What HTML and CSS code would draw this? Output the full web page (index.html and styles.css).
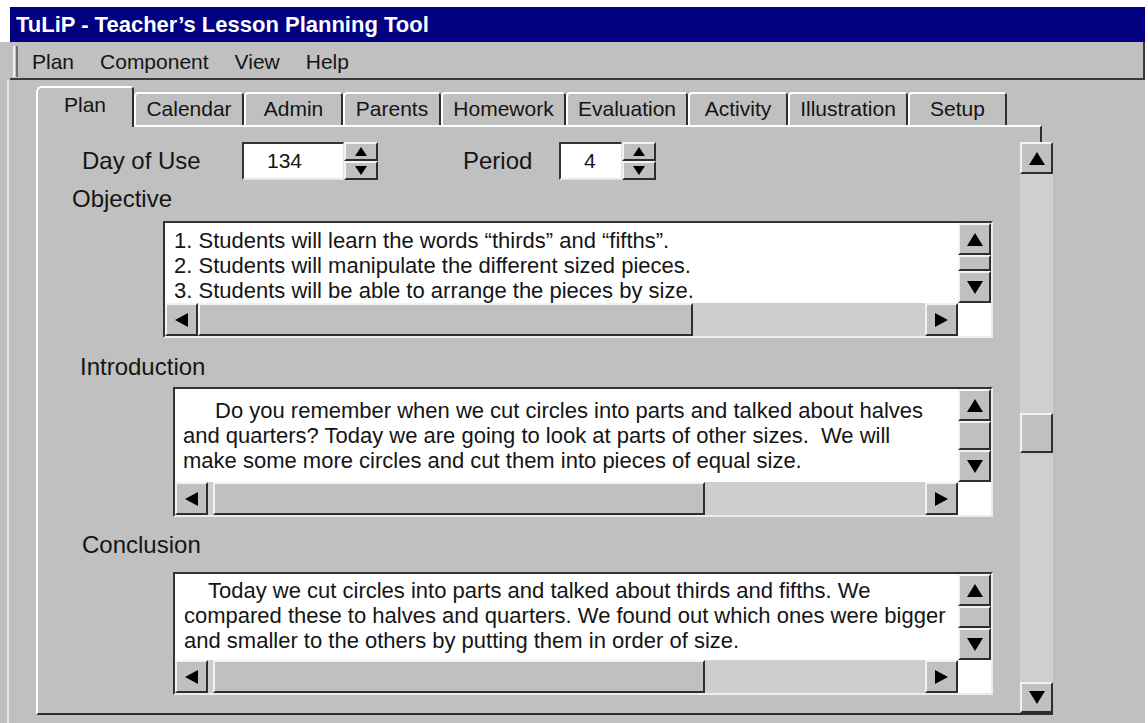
FILE: index.html
```html
<!DOCTYPE html>
<html lang="en">
<head>
<meta charset="utf-8">
<title>TuLiP - Teacher's Lesson Planning Tool</title>
<link rel="stylesheet" href="styles.css">
</head>
<body>
<div class="window">
  <div class="title-row">
    <div class="titlebar">TuLiP - Teacher’s Lesson Planning Tool</div>
  </div>

  <div class="menubar">
    <span class="grip"></span>
    <span class="menu-item">Plan</span>
    <span class="menu-item">Component</span>
    <span class="menu-item">View</span>
    <span class="menu-item">Help</span>
  </div>

  <div class="client">
    <div class="tabstrip">
      <div class="tab active">Plan</div>
      <div class="tab">Calendar</div>
      <div class="tab">Admin</div>
      <div class="tab">Parents</div>
      <div class="tab">Homework</div>
      <div class="tab">Evaluation</div>
      <div class="tab">Activity</div>
      <div class="tab">Illustration</div>
      <div class="tab">Setup</div>
    </div>

    <div class="panel">
      <div class="panel-body">
        <div class="field-row">
          <span class="lbl lbl-day">Day of Use</span>
          <div class="spin-input day-input">134</div>
          <div class="spinner">
            <div class="sbtn"><span class="tri-up sm"></span></div>
            <div class="sbtn"><span class="tri-down sm"></span></div>
          </div>
          <span class="lbl lbl-period">Period</span>
          <div class="spin-input period-input">4</div>
          <div class="spinner">
            <div class="sbtn"><span class="tri-up sm"></span></div>
            <div class="sbtn"><span class="tri-down sm"></span></div>
          </div>
        </div>

        <div class="lbl section-label lbl-obj">Objective</div>
        <div class="textbox tb-obj">
          <div class="tb-text">
            <div>1. Students will learn the words “thirds” and “fifths”.</div>
            <div>2. Students will manipulate the different sized pieces.</div>
            <div>3. Students will be able to arrange the pieces by size.</div>
          </div>
          <div class="tb-vscroll">
            <div class="sbtn"><span class="tri-up"></span></div>
            <div class="vthumb"></div>
            <div class="sbtn"><span class="tri-down"></span></div>
          </div>
          <div class="tb-hscroll">
            <div class="sbtn hbtn"><span class="tri-left"></span></div>
            <div class="hthumb"></div>
            <div class="htrack"></div>
            <div class="sbtn hbtn"><span class="tri-right"></span></div>
          </div>
          <div class="corner"></div>
        </div>

        <div class="lbl section-label lbl-intro">Introduction</div>
        <div class="textbox tb-intro">
          <div class="tb-text">
            <div class="first">Do you remember when we cut circles into parts and talked about halves</div>
            <div>and quarters? Today we are going to look at parts of other sizes.&nbsp; We will</div>
            <div>make some more circles and cut them into pieces of equal size.</div>
          </div>
          <div class="tb-vscroll">
            <div class="sbtn"><span class="tri-up"></span></div>
            <div class="vthumb"></div>
            <div class="sbtn"><span class="tri-down"></span></div>
          </div>
          <div class="tb-hscroll">
            <div class="sbtn hbtn"><span class="tri-left"></span></div>
            <div class="hthumb"></div>
            <div class="htrack"></div>
            <div class="sbtn hbtn"><span class="tri-right"></span></div>
          </div>
          <div class="corner"></div>
        </div>

        <div class="lbl section-label lbl-concl">Conclusion</div>
        <div class="textbox tb-concl">
          <div class="tb-text">
            <div class="first">Today we cut circles into parts and talked about thirds and fifths. We</div>
            <div>compared these to halves and quarters. We found out which ones were bigger</div>
            <div>and smaller to the others by putting them in order of size.</div>
          </div>
          <div class="tb-vscroll">
            <div class="sbtn"><span class="tri-up"></span></div>
            <div class="vthumb"></div>
            <div class="sbtn"><span class="tri-down"></span></div>
          </div>
          <div class="tb-hscroll">
            <div class="sbtn hbtn"><span class="tri-left"></span></div>
            <div class="hthumb"></div>
            <div class="htrack"></div>
            <div class="sbtn hbtn"><span class="tri-right"></span></div>
          </div>
          <div class="corner"></div>
        </div>
      </div>

      <div class="main-vscroll">
        <div class="cap"></div>
        <div class="sbtn"><span class="tri-up"></span></div>
        <div class="track"><div class="track-thumb"></div></div>
        <div class="sbtn"><span class="tri-down"></span></div>
      </div>
    </div>
  </div>
</div>
</body>
</html>
```

FILE: styles.css
```css
* {
  box-sizing: border-box;
}

html,
body {
  margin: 0;
  padding: 0;
}

body {
  width: 1148px;
  height: 723px;
  overflow: hidden;
  background: #ffffff;
  color: #151515;
  font-family: "Liberation Sans", Arial, sans-serif;
}

/* ---------- window frame ---------- */
.window {
  margin-top: 7px;
  width: 1145px;
  height: 716px;
  background: #c0c0c0;
  display: flex;
  flex-direction: column;
}

.title-row {
  background: #ffffff;
  padding-left: 10px;
}

.titlebar {
  height: 35px;
  padding-left: 6px;
  background: #000080;
  color: #ffffff;
  font-size: 22px;
  font-weight: bold;
  line-height: 35px;
  white-space: nowrap;
}

.menubar {
  margin-left: 10px;
  height: 38px;
  display: flex;
  align-items: center;
  padding-top: 3px;
  border-right: 2px solid #3a3a3a;
  border-bottom: 2px solid #3a3a3a;
  font-size: 21px;
}

.grip {
  width: 5px;
  height: 31px;
  margin-left: 3px;
  margin-right: 14px;
  border-left: 2px solid #f0f0f0;
  border-right: 2px solid #707070;
}

.menu-item {
  margin-right: 26px;
}

.client {
  flex: 1;
  margin-left: 7px;
  border-left: 2px solid #e4e4e4;
  display: flex;
  flex-direction: column;
}

/* ---------- tabs ---------- */
.tabstrip {
  height: 45px;
  padding-left: 27px;
  display: flex;
  align-items: flex-end;
  position: relative;
  z-index: 1;
}

.tab {
  height: 33px;
  border-top: 2px solid #ffffff;
  border-left: 2px solid #ffffff;
  border-right: 2px solid #2e2e2e;
  border-radius: 4px 4px 0 0;
  text-align: center;
  font-size: 21px;
  line-height: 30px;
  white-space: nowrap;
}

.tab.active {
  height: 41px;
  margin-bottom: -2px;
  background: #c0c0c0;
  line-height: 34px;
  border-radius: 6px 4px 0 0;
}

.tab:nth-child(1) { width: 98px; }
.tab:nth-child(2) { width: 110px; }
.tab:nth-child(3) { width: 99px; }
.tab:nth-child(4) { width: 98px; }
.tab:nth-child(5) { width: 125px; }
.tab:nth-child(6) { width: 122px; }
.tab:nth-child(7) { width: 100px; }
.tab:nth-child(8) { width: 120px; }
.tab:nth-child(9) { width: 99px; }

/* ---------- tab page ---------- */
.panel {
  margin-left: 27px;
  width: 1017px;
  height: 590px;
  display: flex;
  border-left: 2px solid #ffffff;
  border-bottom: 2px solid #2e2e2e;
}

.panel-body {
  width: 982px;
  border-top: 2px solid #ffffff;
  display: flex;
  flex-direction: column;
}

.lbl {
  font-size: 24px;
  line-height: 28px;
  white-space: nowrap;
}

.field-row {
  margin-top: 15px;
  height: 38px;
  display: flex;
  align-items: center;
}

.lbl-day {
  margin-left: 44px;
  width: 160px;
}

.lbl-period {
  margin-left: 85px;
  width: 96px;
}

.spin-input {
  height: 38px;
  padding-left: 23px;
  background: #ffffff;
  border-top: 2px solid #333333;
  border-left: 2px solid #333333;
  border-right: 1px solid #e0e0e0;
  border-bottom: 2px solid #e6e6e6;
  font-size: 21px;
  line-height: 34px;
}

.day-input { width: 102px; }
.period-input { width: 63px; }

.spinner {
  width: 34px;
  height: 38px;
  display: flex;
  flex-direction: column;
}

.spinner .sbtn {
  width: 34px;
  height: 19px;
}

.section-label {
  align-self: flex-start;
}

.lbl-obj {
  margin-top: 5px;
  margin-left: 34px;
}

.lbl-intro {
  margin-top: 15px;
  margin-left: 42px;
}

.lbl-concl {
  margin-top: 14px;
  margin-left: 44px;
}

/* ---------- scrolling text boxes ---------- */
.textbox {
  display: grid;
  grid-template-columns: 1fr 33px;
  background: #ffffff;
  border-top: 2px solid #333333;
  border-left: 2px solid #333333;
  border-right: 2px solid #ececec;
  border-bottom: 2px solid #ececec;
}

.tb-obj {
  margin-top: 8px;
  margin-left: 125px;
  width: 830px;
  grid-template-rows: 80px 33px;
}

.tb-intro {
  margin-top: 6px;
  margin-left: 135px;
  width: 820px;
  grid-template-rows: 93px 33px;
}

.tb-concl {
  margin-top: 13px;
  margin-left: 135px;
  width: 820px;
  grid-template-rows: 86px 33px;
}

.tb-text {
  overflow: hidden;
  padding: 5px 0 0 9px;
  font-size: 22px;
  line-height: 25px;
  white-space: nowrap;
}

.tb-intro .tb-text {
  padding: 9px 0 0 8px;
}

.tb-intro .first {
  text-indent: 32px;
}

.tb-concl .tb-text {
  padding: 4px 0 0 9px;
}

.tb-concl .first {
  text-indent: 24px;
}

.tb-vscroll {
  display: flex;
  flex-direction: column;
  background: #c0c0c0;
}

.vthumb {
  flex: 1;
  background: #c0c0c0;
  border-top: 2px solid #f2f2f2;
  border-left: 2px solid #f2f2f2;
  border-bottom: 2px solid #2e2e2e;
  border-right: 2px solid #2e2e2e;
}

.tb-hscroll {
  display: flex;
  background: #cecece;
}

.hthumb {
  width: 495px;
  background: #c0c0c0;
  border-top: 2px solid #f2f2f2;
  border-left: 2px solid #f2f2f2;
  border-bottom: 2px solid #2e2e2e;
  border-right: 2px solid #2e2e2e;
}

.tb-intro .hthumb,
.tb-concl .hthumb {
  margin-left: 5px;
  width: 492px;
}

.htrack {
  flex: 1;
}

.corner {
  background: #ffffff;
}

/* ---------- buttons and arrows ---------- */
.sbtn {
  width: 33px;
  height: 32px;
  flex: none;
  display: flex;
  align-items: center;
  justify-content: center;
  background: #c0c0c0;
  border-top: 2px solid #f2f2f2;
  border-left: 2px solid #f2f2f2;
  border-bottom: 2px solid #2e2e2e;
  border-right: 2px solid #2e2e2e;
}

.hbtn {
  height: 33px;
}

.tri-up,
.tri-down,
.tri-left,
.tri-right {
  width: 0;
  height: 0;
}

.tri-up {
  border-left: 8px solid transparent;
  border-right: 8px solid transparent;
  border-bottom: 13px solid #000000;
}

.tri-down {
  border-left: 8px solid transparent;
  border-right: 8px solid transparent;
  border-top: 13px solid #000000;
}

.tri-left {
  border-top: 7px solid transparent;
  border-bottom: 7px solid transparent;
  border-right: 13px solid #000000;
}

.tri-right {
  border-top: 7px solid transparent;
  border-bottom: 7px solid transparent;
  border-left: 13px solid #000000;
}

.tri-up.sm {
  border-left-width: 6px;
  border-right-width: 6px;
  border-bottom-width: 9px;
}

.tri-down.sm {
  border-left-width: 6px;
  border-right-width: 6px;
  border-top-width: 9px;
}

/* ---------- page scrollbar ---------- */
.main-vscroll {
  width: 33px;
  display: flex;
  flex-direction: column;
}

.cap {
  width: 22px;
  height: 17px;
  flex: none;
  border-top: 2px solid #ffffff;
  border-right: 2px solid #2e2e2e;
}

.main-vscroll .sbtn {
  height: 32px;
}

.main-vscroll .sbtn:last-child {
  height: 31px;
}

.track {
  flex: 1;
  background: #cfcfcf;
}

.track-thumb {
  margin-top: 239px;
  height: 40px;
  background: #c0c0c0;
  border-top: 2px solid #f2f2f2;
  border-left: 2px solid #f2f2f2;
  border-bottom: 2px solid #2e2e2e;
  border-right: 2px solid #2e2e2e;
}
```
